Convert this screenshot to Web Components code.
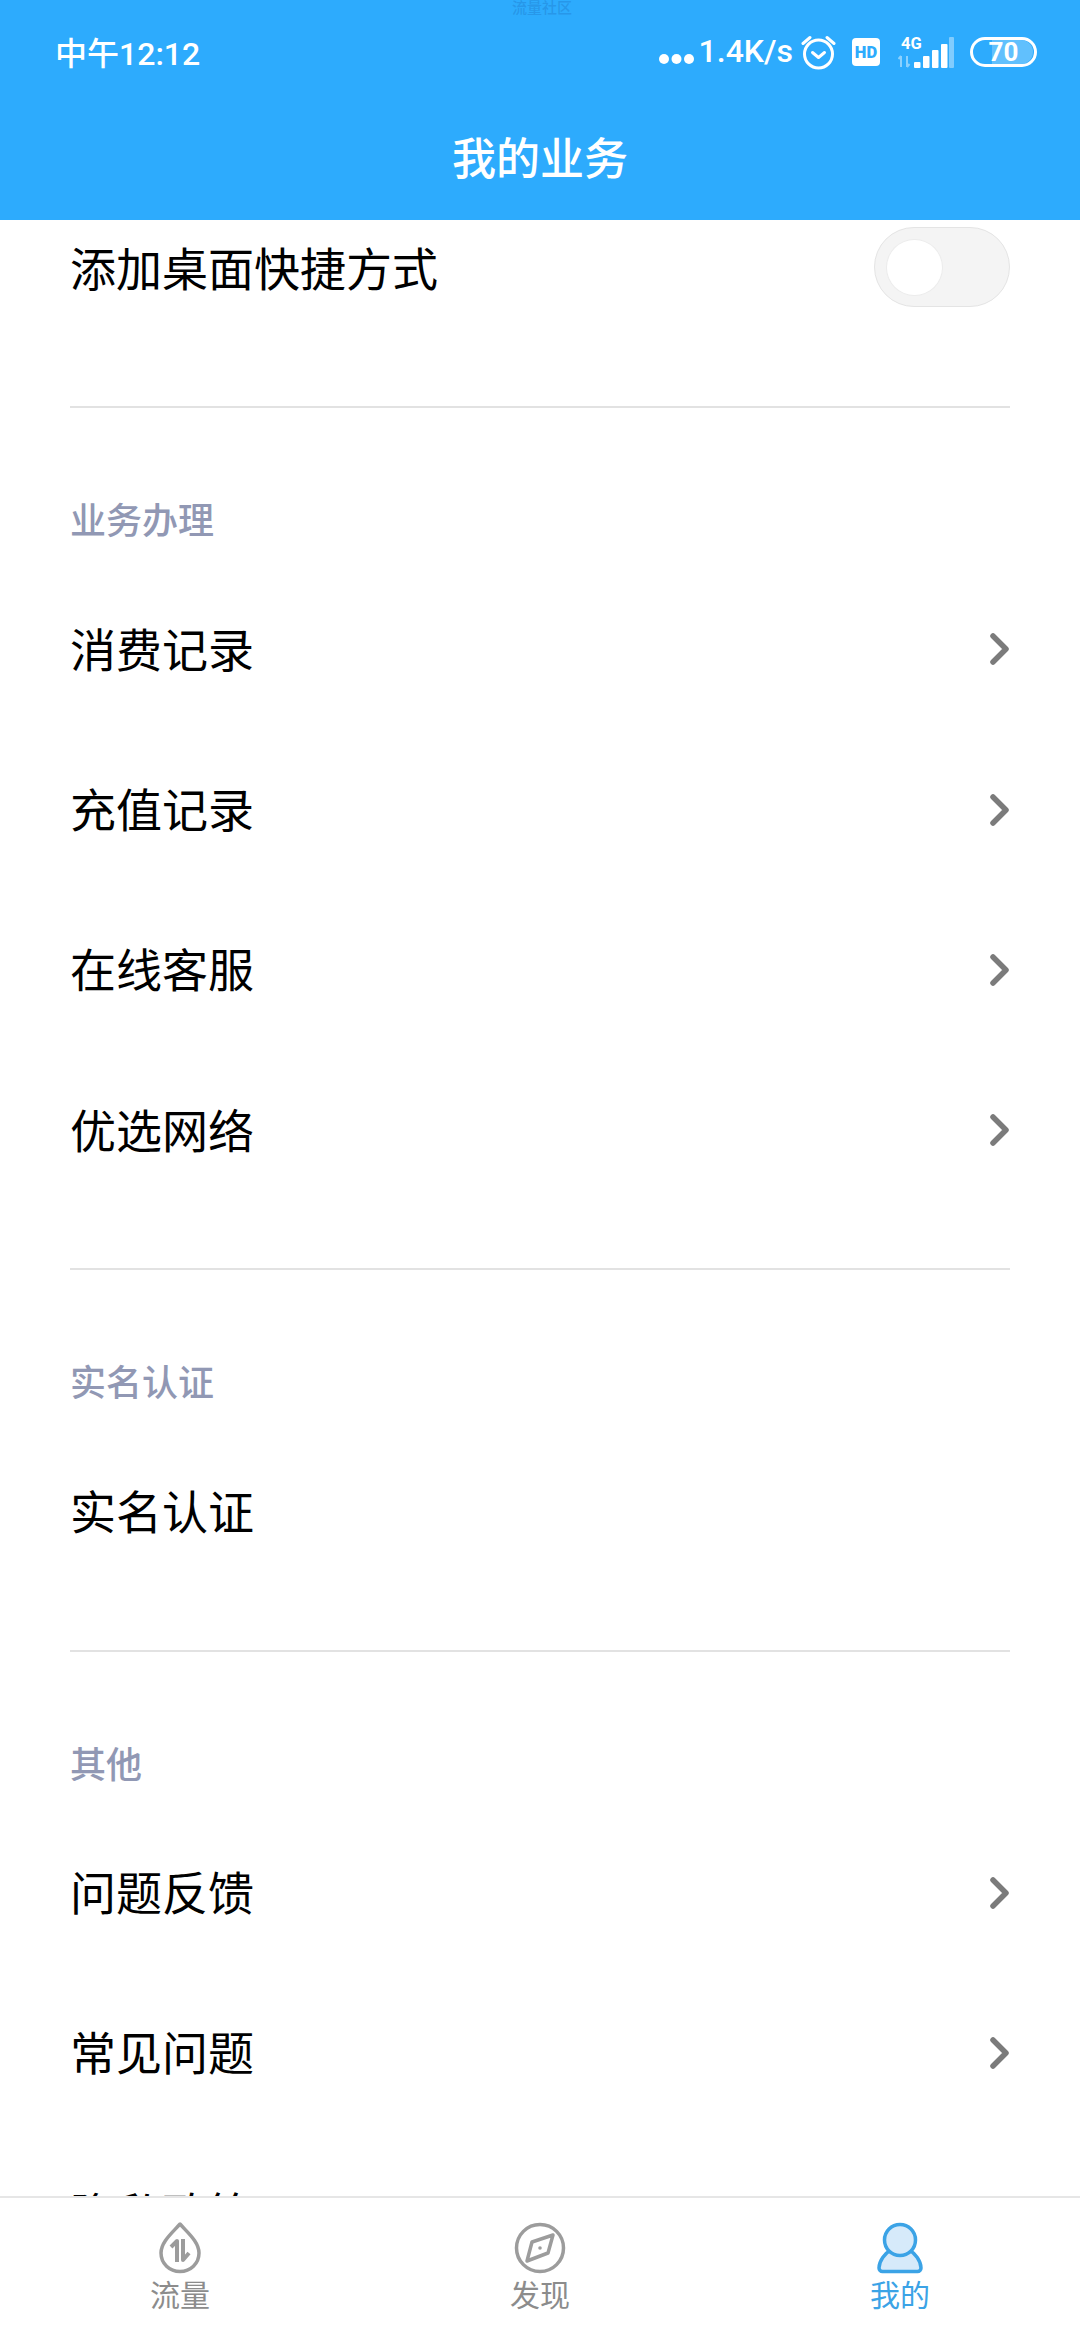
<!DOCTYPE html>
<html lang="zh">
<head>
<meta charset="utf-8">
<title>我的业务</title>
<style>
  html, body { margin: 0; height: 100%; }
  body {
    width: 1080px;
    height: 2340px;
    overflow: hidden;
    display: flex;
    flex-direction: column;
    background: #fff;
    font-family: "Noto Sans CJK SC", "Noto Sans", sans-serif;
  }
</style>
</head>
<body>
  <app-header title="我的业务">
    <status-bar slot="status" time="中午12:12" speed="1.4K/s" battery="70"></status-bar>
  </app-header>

  <scroll-list>
    <list-section>
      <list-row>添加桌面快捷方式<toggle-switch slot="end"></toggle-switch></list-row>
    </list-section>
    <list-section label="业务办理">
      <list-row arrow>消费记录</list-row>
      <list-row arrow>充值记录</list-row>
      <list-row arrow>在线客服</list-row>
      <list-row arrow>优选网络</list-row>
    </list-section>
    <list-section label="实名认证">
      <list-row>实名认证</list-row>
    </list-section>
    <list-section label="其他">
      <list-row arrow>问题反馈</list-row>
      <list-row arrow>常见问题</list-row>
      <list-row arrow>隐私政策</list-row>
    </list-section>
  </scroll-list>

  <tab-bar>
    <tab-item icon="drop" label="流量"></tab-item>
    <tab-item icon="compass" label="发现"></tab-item>
    <tab-item icon="person" label="我的" active></tab-item>
  </tab-bar>

<script>
class StatusBar extends HTMLElement {
  constructor() {
    super();
    this.attachShadow({ mode: 'open' });
  }

  connectedCallback() {
    const time = this.getAttribute('time') || '';
    const speed = this.getAttribute('speed') || '';
    const battery = this.getAttribute('battery') || '';
    this.shadowRoot.innerHTML = /* html */`
      <style>
        :host {
          display: flex;
          align-items: center;
          height: 104px;
          padding: 0 43px 0 55px;
          position: relative;
          color: #fff;
          font: 500 32px Roboto, "Noto Sans CJK SC", sans-serif;
        }
        .time { margin-right: auto; padding-bottom: 2px; }
        .carrier {
          position: absolute;
          left: 512px;
          top: -4px;
          font: 500 15px "Noto Sans CJK SC", sans-serif;
          color: rgba(30, 120, 200, .4);
        }
        svg { display: block; flex: none; }
        .speed { margin: 0 8px 0 5px; padding-bottom: 2px; }
        .hd { margin-left: 16px; }
        .net { margin-left: 18px; }
        .battery {
          margin-left: 16px;
          box-sizing: border-box;
          width: 67px;
          height: 30px;
          border: 3px solid #fff;
          border-radius: 15px;
          position: relative;
          overflow: hidden;
          display: flex;
          align-items: center;
          justify-content: center;
        }
        .battery i {
          position: absolute;
          left: 19px;
          top: 0;
          bottom: 0;
          width: 41px;
          background: rgba(255, 255, 255, .25);
          border-radius: 0 12px 12px 0;
        }
        .battery b {
          position: relative;
          font: 700 26px/24px Roboto, sans-serif;
        }
      </style>
      <span class="time">${time}</span>
      <span class="carrier">流量社区</span>
      <svg width="35" height="40" viewBox="0 0 35 40" fill="#fff">
        <circle cx="5" cy="27" r="5"/><circle cx="17.5" cy="27" r="5"/><circle cx="30" cy="27" r="5"/>
      </svg>
      <span class="speed">${speed}</span>
      <svg width="35" height="36" viewBox="0 0 35 36" fill="none" stroke="#fff" stroke-width="3" stroke-linecap="round" stroke-linejoin="round">
        <circle cx="17.5" cy="20" r="14"/>
        <path d="M11.5 18.5l6 5 6-5"/>
        <path d="M2 9.5L9 3.5M33 9.5L26 3.5"/>
      </svg>
      <svg class="hd" width="28" height="28" viewBox="0 0 28 28">
        <rect width="28" height="28" rx="4" fill="#fff"/>
        <text x="14" y="20" text-anchor="middle" font-family="Roboto" font-weight="900" font-size="16.5" fill="#2dabfd">HD</text>
      </svg>
      <svg class="net" width="56" height="32" viewBox="0 0 56 32">
        <text x="3" y="13" font-family="Roboto" font-weight="700" font-size="16.500" fill="#fff">4G</text>
        <path d="M3 31V20M3 20l-2.500 3M9 20v11M9 31l2.500-3" fill="none" stroke="#fff" stroke-opacity=".45" stroke-width="2"/>
        <g fill="#fff">
          <rect x="16" y="26" width="6.500" height="6" rx="1"/>
          <rect x="25" y="20" width="6.500" height="12" rx="1"/>
          <rect x="34" y="14" width="6.500" height="18" rx="1"/>
          <rect x="43" y="8" width="6.500" height="24" rx="1"/>
          <rect x="51" y="1" width="5" height="31" rx="1" fill-opacity=".4"/>
        </g>
      </svg>
      <span class="battery"><i></i><b>${battery}</b></span>
    `;
  }
}
customElements.define('status-bar', StatusBar);

class AppHeader extends HTMLElement {
  constructor() {
    super();
    this.attachShadow({ mode: 'open' });
  }

  connectedCallback() {
    this.shadowRoot.innerHTML = /* html */`
      <style>
        :host {
          display: block;
          flex: none;
          height: 220px;
          background: #2dabfd;
        }
        h1 {
          margin: 0;
          height: 104px;
          display: flex;
          align-items: center;
          justify-content: center;
          color: #fff;
          font: 500 44px "Noto Sans CJK SC", sans-serif;
        }
      </style>
      <slot name="status"></slot>
      <h1></h1>
    `;
    this.shadowRoot.querySelector('h1').textContent = this.getAttribute('title') || '';
  }
}
customElements.define('app-header', AppHeader);

class ScrollList extends HTMLElement {
  constructor() {
    super();
    this.attachShadow({ mode: 'open' });
    this.shadowRoot.innerHTML = /* html */`
      <style>
        :host {
          display: block;
          flex: 1;
          min-height: 0;
          overflow: hidden;
        }
        /* the list is scrolled down a little in this state */
        .content {
          margin-top: -32px;
          padding: 0 70px;
        }
      </style>
      <div class="content"><slot></slot></div>
    `;
  }
}
customElements.define('scroll-list', ScrollList);

class ListSection extends HTMLElement {
  constructor() {
    super();
    this.attachShadow({ mode: 'open' });
  }

  connectedCallback() {
    const label = this.getAttribute('label');
    this.shadowRoot.innerHTML = /* html */`
      <style>
        :host {
          display: block;
          padding-bottom: 58px;
          border-bottom: 2px solid #e2e2e2;
        }
        :host(:last-child) { border-bottom: 0; }
        .label {
          padding-top: 82px;
          margin-bottom: 23px;
          height: 56px;
          line-height: 56px;
          color: #9198b4;
          font-size: 36px;
          font-weight: 500;
        }
      </style>
      ${label ? '<div class="label"></div>' : ''}
      <slot></slot>
    `;
    if (label) this.shadowRoot.querySelector('.label').textContent = label;
  }
}
customElements.define('list-section', ListSection);

class ListRow extends HTMLElement {
  constructor() {
    super();
    this.attachShadow({ mode: 'open' });
  }

  connectedCallback() {
    const arrow = this.hasAttribute('arrow') ? /* html */`
      <svg width="24" height="36" viewBox="0 0 24 36" fill="none" stroke="#7b7b7b" stroke-width="5.500" stroke-linecap="round" stroke-linejoin="round">
        <path d="M7 5l13 13L7 31"/>
      </svg>` : '';
    this.shadowRoot.innerHTML = /* html */`
      <style>
        :host {
          display: flex;
          align-items: center;
          justify-content: space-between;
          height: 160.25px;
          color: #000;
          font-size: 46px;
        }
        .text { padding-bottom: 5px; }
        svg { display: block; }
      </style>
      <span class="text"><slot></slot></span>
      <slot name="end">${arrow}</slot>
    `;
  }
}
customElements.define('list-row', ListRow);

class ToggleSwitch extends HTMLElement {
  constructor() {
    super();
    this.attachShadow({ mode: 'open' });
    this.shadowRoot.innerHTML = /* html */`
      <style>
        :host {
          display: flex;
          align-items: center;
          box-sizing: border-box;
          width: 136px;
          height: 80px;
          margin-bottom: 2px;
          padding-left: 12px;
          border: 1px solid #e4e4e4;
          border-radius: 40px;
          background: #f4f4f4;
        }
        span {
          width: 55px;
          height: 55px;
          border-radius: 50%;
          background: #fff;
          box-shadow: 0 0 0 1px #ececec;
        }
      </style>
      <span></span>
    `;
  }
}
customElements.define('toggle-switch', ToggleSwitch);

class TabBar extends HTMLElement {
  constructor() {
    super();
    this.attachShadow({ mode: 'open' });
    this.shadowRoot.innerHTML = /* html */`
      <style>
        :host {
          display: grid;
          grid-template-columns: repeat(3, 1fr);
          flex: none;
          height: 144px;
          box-sizing: border-box;
          border-top: 2px solid #e6e6e6;
          background: #fff;
        }
      </style>
      <slot></slot>
    `;
  }
}
customElements.define('tab-bar', TabBar);

const TAB_ICONS = {
  drop: /* html */`
    <svg width="44" height="52" viewBox="0 0 44 52" fill="none" stroke="#9c9c9c" stroke-width="3.500">
      <path d="M22 2C14 11 3 20 3 31c0 10.500 8.500 18.500 19 18.500S41 41.500 41 31C41 20 30 11 22 2z" stroke-linejoin="round"/>
      <path d="M13 25l6-6v21M25 17v21l6-7" stroke-width="4" stroke-linejoin="round"/>
    </svg>`,
  compass: /* html */`
    <svg width="52" height="52" viewBox="0 0 52 52" fill="none" stroke="#9c9c9c" stroke-width="3.500">
      <circle cx="26" cy="26" r="23.500"/>
      <path d="M39 13l-5 18-21 8 5-19z" stroke-linejoin="round"/>
      <circle cx="26" cy="26" r="1.800" fill="#9c9c9c" stroke="none"/>
    </svg>`,
  person: /* html */`
    <svg width="46" height="52" viewBox="0 0 46 52" fill="#d6eafa" stroke="#3ba3e6" stroke-width="3.500" stroke-linejoin="round">
      <path d="M14 28C8 31 2 39 2 46c0 2 1.500 3.500 3.500 3.500h35c2 0 3.500-1.500 3.500-3.500 0-7-6-15-12-18"/>
      <circle cx="23" cy="18" r="15.500"/>
    </svg>`,
};

class TabItem extends HTMLElement {
  constructor() {
    super();
    this.attachShadow({ mode: 'open' });
  }

  connectedCallback() {
    const icon = TAB_ICONS[this.getAttribute('icon')] || '';
    this.shadowRoot.innerHTML = /* html */`
      <style>
        :host {
          display: flex;
          flex-direction: column;
          align-items: center;
          padding-top: 24px;
          color: #8c8c8c;
          font-size: 30px;
        }
        :host([active]) { color: #3ba3e6; }
        svg { display: block; }
        .label { line-height: 40px; margin-top: -1px; }
      </style>
      ${icon}
      <span class="label"></span>
    `;
    this.shadowRoot.querySelector('.label').textContent = this.getAttribute('label') || '';
  }
}
customElements.define('tab-item', TabItem);
</script>
</body>
</html>
